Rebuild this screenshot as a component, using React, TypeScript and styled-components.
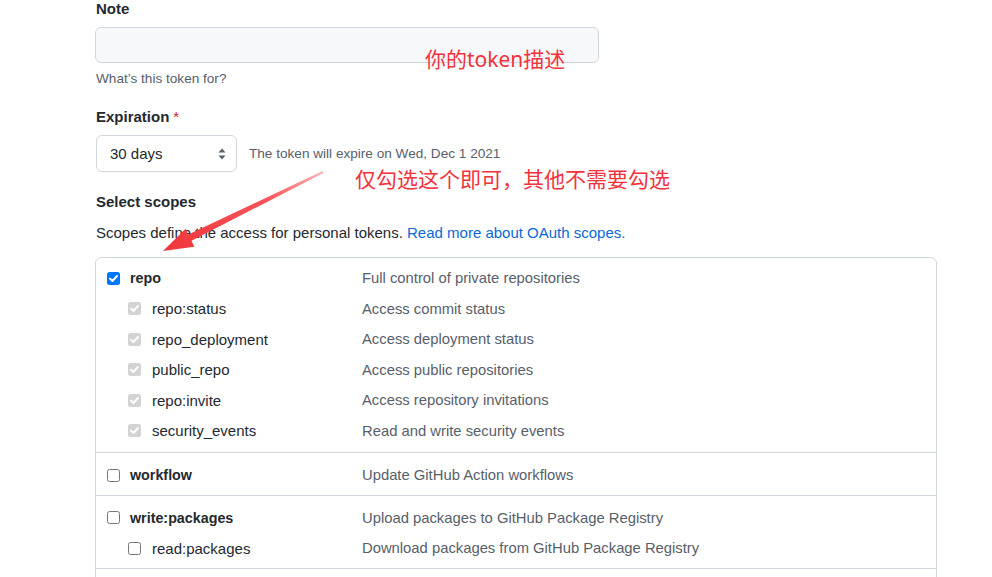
import React from "react";
import styled, { createGlobalStyle } from "styled-components";

const Global = createGlobalStyle`
  html, body { margin: 0; padding: 0; background: #ffffff; overflow: hidden; }
  body { font-family: "Liberation Sans", Arial, sans-serif; color: #24292f; }
  * { box-sizing: border-box; }
`;

const Page = styled.div`
  position: relative;
  width: 992px;
  height: 577px;
  overflow: hidden;
`;

const Form = styled.div`
  margin-left: 95px;
  width: 842px;
  display: flex;
  flex-direction: column;
`;

const Label = styled.div<{ $mt?: number }>`
  margin-top: ${(p) => p.$mt ?? 0}px;
  font-size: 15px;
  font-weight: 700;
  line-height: 18px;
  padding-left: 1px;
  color: #24292f;
`;

const Required = styled.span`
  color: #cf222e;
  font-weight: 400;
  margin-left: 4px;
`;

const TextInput = styled.div`
  margin-top: 9px;
  width: 504px;
  height: 36px;
  background: #f6f8fa;
  border: 1px solid #d0d7de;
  border-radius: 6px;
`;

const Hint = styled.div<{ $mt?: number }>`
  margin-top: ${(p) => p.$mt ?? 0}px;
  font-size: 13.6px;
  line-height: 18px;
  color: #57606a;
  padding-left: 1px;
`;

const ExpRow = styled.div`
  margin-top: 9px;
  display: flex;
  align-items: center;
  gap: 11px;
`;

const Select = styled.div`
  width: 141px;
  height: 37px;
  margin-left: 1px;
  border: 1px solid #d0d7de;
  border-radius: 6px;
  background: #ffffff;
  display: flex;
  align-items: center;
  justify-content: space-between;
  padding: 0 9px 0 13px;
  font-size: 15px;
  color: #24292f;
`;

const Paragraph = styled.div`
  margin-top: 12px;
  font-size: 15px;
  line-height: 20px;
  padding-left: 1px;
  color: #24292f;
`;

const Link = styled.a`
  color: #0969da;
  text-decoration: none;
`;

const ScopeBox = styled.div`
  margin-top: 14px;
  border: 1px solid #d0d7de;
  border-radius: 6px;
`;

const Group = styled.div<{ $pt: number; $pb: number; $minH?: number }>`
  padding: ${(p) => p.$pt}px 0 ${(p) => p.$pb}px;
  min-height: ${(p) => p.$minH ?? 0}px;
  & + & {
    border-top: 1px solid #d0d7de;
  }
`;

const Row = styled.div`
  display: grid;
  grid-template-columns: 266px 1fr;
  height: 30.5px;
  align-items: center;
`;

const NameCell = styled.div<{ $child?: boolean }>`
  display: flex;
  align-items: center;
  gap: ${(p) => (p.$child ? 11 : 10)}px;
  padding-left: ${(p) => (p.$child ? 32 : 11)}px;
`;

const Name = styled.span<{ $bold?: boolean }>`
  font-size: ${(p) => (p.$bold ? 14.3 : 15)}px;
  font-weight: ${(p) => (p.$bold ? 700 : 400)};
  color: #24292f;
`;

const Desc = styled.span`
  font-size: 14.8px;
  color: #57606a;
`;

const Box = styled.span<{ $state: "on" | "dis" | "off" }>`
  width: 13px;
  height: 13px;
  flex: 0 0 13px;
  border-radius: 2.5px;
  display: inline-flex;
  align-items: center;
  justify-content: center;
  background: ${(p) => (p.$state === "on" ? "#0075ff" : p.$state === "dis" ? "#d3d3d3" : "#ffffff")};
  border: ${(p) => (p.$state === "off" ? "1px solid #767676" : "none")};
`;

const Note = styled.div<{ $left: number; $top: number }>`
  position: absolute;
  left: ${(p) => p.$left}px;
  top: ${(p) => p.$top}px;
  font-family: "Noto Sans", "Noto Sans CJK SC", sans-serif;
  font-size: 21px;
  line-height: 22px;
  color: #f3333b;
  white-space: nowrap;
`;

const ArrowLayer = styled.svg`
  position: absolute;
  left: 0;
  top: 0;
  pointer-events: none;
`;

const Check: React.FC<{ state: "on" | "dis" | "off" }> = ({ state }) => (
  <Box $state={state}>
    {state !== "off" && (
      <svg width="11" height="11" viewBox="0 0 11 11">
        <path d="M2 5.6 L4.4 8 L9 3" fill="none" stroke="#fff" strokeWidth="2" strokeLinecap="round" strokeLinejoin="round" />
      </svg>
    )}
  </Box>
);

type Scope = { name: string; desc: string; state: "on" | "dis" | "off"; child?: boolean };

const groups: { pt: number; pb: number; minH?: number; rows: Scope[] }[] = [
  {
    pt: 5,
    pb: 6,
    rows: [
      { name: "repo", desc: "Full control of private repositories", state: "on" },
      { name: "repo:status", desc: "Access commit status", state: "dis", child: true },
      { name: "repo_deployment", desc: "Access deployment status", state: "dis", child: true },
      { name: "public_repo", desc: "Access public repositories", state: "dis", child: true },
      { name: "repo:invite", desc: "Access repository invitations", state: "dis", child: true },
      { name: "security_events", desc: "Read and write security events", state: "dis", child: true },
    ],
  },
  { pt: 7, pb: 4, rows: [{ name: "workflow", desc: "Update GitHub Action workflows", state: "off" }] },
  {
    pt: 7,
    pb: 4,
    rows: [
      { name: "write:packages", desc: "Upload packages to GitHub Package Registry", state: "off" },
      { name: "read:packages", desc: "Download packages from GitHub Package Registry", state: "off", child: true },
    ],
  },
  { pt: 6, pb: 5, minH: 42, rows: [] },
];

export default function App() {
  return (
    <Page>
      <Global />
      <Form>
        <Label>Note</Label>
        <TextInput />
        <Hint $mt={7}>What’s this token for?</Hint>
        <Label $mt={20}>
          Expiration<Required>*</Required>
        </Label>
        <ExpRow>
          <Select>
            <span>30 days</span>
            <svg width="10" height="14" viewBox="0 0 10 14">
              <path d="M5 1.5 L8.5 5.5 H1.5 Z" fill="#57606a" />
              <path d="M5 12.5 L8.5 8.5 H1.5 Z" fill="#57606a" />
            </svg>
          </Select>
          <Hint>The token will expire on Wed, Dec 1 2021</Hint>
        </ExpRow>
        <Label $mt={21}>Select scopes</Label>
        <Paragraph>
          Scopes define the access for personal tokens. <Link>Read more about OAuth scopes.</Link>
        </Paragraph>
        <ScopeBox>
          {groups.map((g, i) => (
            <Group key={i} $pt={g.pt} $pb={g.pb} $minH={g.minH}>
              {g.rows.map((r) => (
                <Row key={r.name}>
                  <NameCell $child={r.child}>
                    <Check state={r.state} />
                    <Name $bold={!r.child}>{r.name}</Name>
                  </NameCell>
                  <Desc>{r.desc}</Desc>
                </Row>
              ))}
            </Group>
          ))}
        </ScopeBox>
      </Form>

      <Note $left={425} $top={48}>你的token描述</Note>
      <Note $left={355} $top={168}>仅勾选这个即可，其他不需要勾选</Note>

      <ArrowLayer width="992" height="577" viewBox="0 0 992 577">
        <defs>
          <linearGradient id="arrowGrad" x1="323" y1="172" x2="163" y2="251" gradientUnits="userSpaceOnUse">
            <stop offset="0" stopColor="#ffb3b3" />
            <stop offset="0.35" stopColor="#f6555a" />
            <stop offset="1" stopColor="#f0353a" />
          </linearGradient>
        </defs>
        <polygon
          points="163,251 194.3,246.7 191.5,240.8 323.4,172.9 322.6,171.1 188.3,234.6 185.5,228.7"
          fill="url(#arrowGrad)"
        />
      </ArrowLayer>
    </Page>
  );
}
